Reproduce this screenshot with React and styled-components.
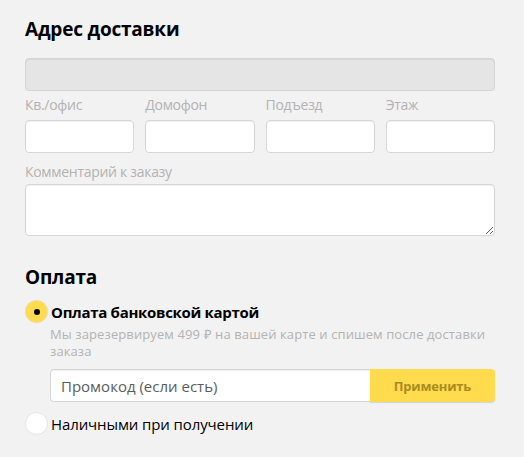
import React from "react";
import styled, { createGlobalStyle } from "styled-components";

const Global = createGlobalStyle`
  html, body { margin: 0; padding: 0; background: #f2f2f2; }
  body { font-family: "Open Sans", "Liberation Sans", sans-serif; color: #000; }
  * { box-sizing: border-box; }
`;

const Page = styled.div`
  width: 524px;
  padding: 16px 29px 20px 25px;
`;

const Heading = styled.h2`
  margin: 0;
  font-size: 19px;
  line-height: 26px;
  font-weight: 700;
  letter-spacing: -0.2px;
`;

const fieldBase = `
  display: block;
  width: 100%;
  border: 1px solid #d6d6d6;
  border-radius: 4px;
  background: #fff;
  box-shadow: inset 0 1px 1px rgba(0,0,0,0.06);
  font-family: inherit;
  outline: none;
`;

const AddressInput = styled.input`
  ${fieldBase}
  height: 33px;
  margin-top: 16px;
  background: #e5e5e5;
  border-color: #d5d5d5;
`;

const Row = styled.div`
  display: grid;
  grid-template-columns: repeat(4, 1fr);
  column-gap: 11px;
  margin-top: 6px;
`;

const Field = styled.label`
  display: flex;
  flex-direction: column;
`;

const Label = styled.span`
  font-size: 14px;
  line-height: 16px;
  color: #b3b3b3;
  letter-spacing: -0.3px;
  margin-bottom: ${(p) => p.$gap || 7}px;
`;

const Input = styled.input`
  ${fieldBase}
  height: 33px;
`;

const Comment = styled(Field)`
  margin-top: 11px;
`;

const TextArea = styled.textarea`
  ${fieldBase}
  height: 52px;
  resize: vertical;
`;

const PayHeading = styled(Heading)`
  margin-top: 28px;
`;

const Option = styled.div`
  display: flex;
  align-items: center;
  gap: 4px;
  margin-top: ${(p) => p.$top}px;
`;

const Radio = styled.span`
  width: 21px;
  height: 21px;
  margin-left: 1px;
  border-radius: 50%;
  flex: none;
  display: flex;
  align-items: center;
  justify-content: center;
  background: ${(p) => (p.$checked ? "#ffdb4d" : "#fff")};
  box-shadow: ${(p) =>
    p.$checked ? "0 0 0 1px rgba(230,190,0,0.35)" : "0 0 0 1px rgba(0,0,0,0.04)"};
  &::after {
    content: "";
    display: ${(p) => (p.$checked ? "block" : "none")};
    width: 6px;
    height: 6px;
    border-radius: 50%;
    background: #000;
  }
`;

const OptionText = styled.span`
  font-size: 15px;
  line-height: 20px;
  font-weight: ${(p) => (p.$bold ? 700 : 400)};
  letter-spacing: ${(p) => (p.$bold ? "-0.3px" : "-0.1px")};
`;

const Details = styled.div`
  padding-left: 25px;
`;

const Note = styled.p`
  margin: 4px 0 0;
  font-size: 13px;
  line-height: 17px;
  color: #b3b3b3;
  letter-spacing: 0.1px;
`;

const Promo = styled.div`
  display: flex;
  margin-top: 9px;
  height: 33px;
`;

const PromoInput = styled.input`
  ${fieldBase}
  flex: 1;
  height: 33px;
  border-radius: 4px 0 0 4px;
  border-right: none;
  padding: 0 10px;
  font-size: 15px;
  color: #000;
  &::placeholder { color: #5c5c5c; }
`;

const Apply = styled.button`
  width: 125px;
  height: 33px;
  border: none;
  border-radius: 0 4px 4px 0;
  background: #ffdb4d;
  box-shadow: 0 1px 1px rgba(0,0,0,0.12);
  color: #a98d20;
  font-family: inherit;
  font-size: 13px;
  font-weight: 700;
  letter-spacing: -0.2px;
  cursor: pointer;
`;

export default function App() {
  return (
    <Page>
      <Global />
      <Heading>Адрес доставки</Heading>
      <AddressInput disabled />
      <Row>
        {["Кв./офис", "Домофон", "Подъезд", "Этаж"].map((l) => (
          <Field key={l}>
            <Label>{l}</Label>
            <Input />
          </Field>
        ))}
      </Row>
      <Comment>
        <Label $gap={4}>Комментарий к заказу</Label>
        <TextArea />
      </Comment>
      <PayHeading>Оплата</PayHeading>
      <Option $top={11}>
        <Radio $checked />
        <OptionText $bold>Оплата банковской картой</OptionText>
      </Option>
      <Details>
        <Note>
          Мы зарезервируем 499 ₽ на вашей карте и спишем после доставки
          <br />
          заказа
        </Note>
        <Promo>
          <PromoInput placeholder="Промокод (если есть)" />
          <Apply>Применить</Apply>
        </Promo>
      </Details>
      <Option $top={11}>
        <Radio />
        <OptionText>Наличными при получении</OptionText>
      </Option>
    </Page>
  );
}
